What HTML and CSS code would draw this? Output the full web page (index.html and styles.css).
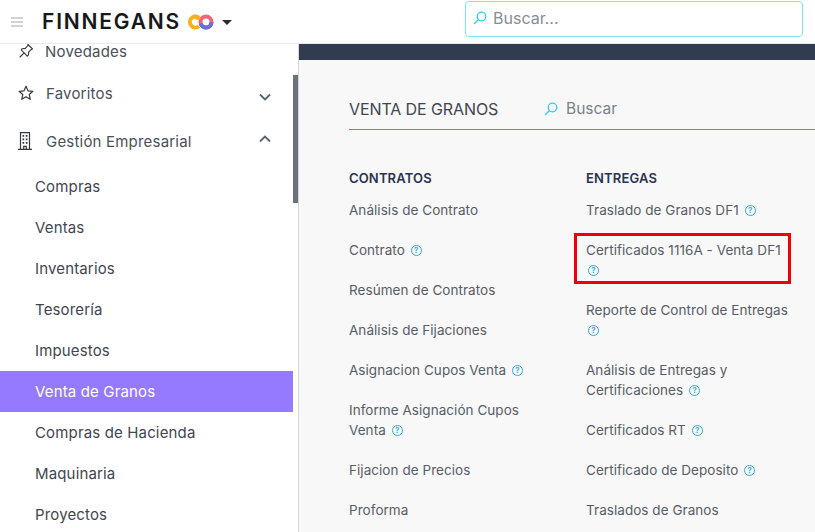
FILE: index.html
```html
<!DOCTYPE html>
<html lang="es">
<head>
    <meta charset="UTF-8">
    <meta name="viewport" content="width=device-width, initial-scale=1.0">
    <title>Finnegans</title>
    <link rel="stylesheet" href="styles.css">
</head>
<body>
    <header class="topbar">
        <div class="brand">
            <svg class="menu-icon" viewBox="0 0 14 12" width="14" height="12"><path d="M1 2h12M1 6h12M1 10h12" stroke="#a3a7ab" stroke-width="1.2" fill="none"/></svg>
            <span class="logo-text">FINNEGANS</span>
            <svg class="logo-mark" viewBox="0 0 28 16" width="28" height="16">
                <circle cx="20" cy="8" r="5.5" fill="none" stroke="#f0637a" stroke-width="4"/>
                <path d="M14.700 9.500a5.500 5.500 0 0 0 10.800-1.500" fill="none" stroke="#6f6bd8" stroke-width="4"/>
                <path d="M13 3.800a5.500 5.500 0 1 0 0 8.400" fill="none" stroke="#fbb11c" stroke-width="4"/>
                <path d="M8 2.500a5.500 5.500 0 0 1 5 3" fill="none" stroke="#fbb11c" stroke-width="4"/>
            </svg>
            <span class="caret"></span>
        </div>
        <div class="top-search">
            <svg class="search-icon" viewBox="0 0 14 14" width="14" height="14"><circle cx="8.5" cy="5.5" r="4.3" fill="none" stroke="#35c9f2" stroke-width="1.3"/><path d="M5.3 8.700 1 13" stroke="#35c9f2" stroke-width="1.3" fill="none"/></svg>
            <span>Buscar...</span>
        </div>
    </header>

    <div class="layout">
        <aside class="sidebar">
            <nav class="side-nav">
                <a class="side-item side-item-first">
                    <svg class="side-icon" viewBox="0 0 16 16" width="16" height="16"><path d="M10 1.500l4.500 4.500-1.200.4-2.600 2.600-.3 3-1.200 1.100L6.200 9.800 2 14l4.200-4.200L3.200 6.900l1.100-1.200 3-.3 2.300-2.600z" fill="none" stroke="#343a40" stroke-width="1.100" stroke-linejoin="round"/></svg>
                    Novedades
                </a>
                <a class="side-item">
                    <svg class="side-icon" viewBox="0 0 16 16" width="16" height="16"><path d="M8 1.300l2 4.500 4.900.5-3.700 3.200 1.100 4.800L8 11.800l-4.300 2.500 1.100-4.800L1.100 6.300l4.900-.5z" fill="none" stroke="#343a40" stroke-width="1.200" stroke-linejoin="round"/></svg>
                    Favoritos
                    <svg class="chevron" viewBox="0 0 12 8" width="12" height="8"><path d="M1 1.500l5 5 5-5" fill="none" stroke="#5a6270" stroke-width="1.800"/></svg>
                </a>
                <a class="side-item">
                    <svg class="side-icon building" viewBox="0 0 14 18" width="14" height="18"><path d="M2.500 17.500V.7h9v16.800M0 17.400h14M5.700 17.400v-3h2.600v3" fill="none" stroke="#343a40" stroke-width="1.200"/><path d="M4.500 3h1.700v1.700H4.500zM7.800 3h1.700v1.700H7.800zM4.500 6.500h1.700v1.700H4.500zM7.800 6.500h1.700v1.700H7.800zM4.500 10h1.700v1.700H4.500zM7.800 10h1.700v1.700H7.800z" fill="#343a40"/></svg>
                    Gestión Empresarial
                    <svg class="chevron chevron-up" viewBox="0 0 12 8" width="12" height="8"><path d="M1 6.500l5-5 5 5" fill="none" stroke="#5a6270" stroke-width="1.800"/></svg>
                </a>
                <a class="sub-item">Compras</a>
                <a class="sub-item">Ventas</a>
                <a class="sub-item">Inventarios</a>
                <a class="sub-item">Tesorería</a>
                <a class="sub-item">Impuestos</a>
                <a class="sub-item active">Venta de Granos</a>
                <a class="sub-item">Compras de Hacienda</a>
                <a class="sub-item">Maquinaria</a>
                <a class="sub-item">Proyectos</a>
            </nav>
            <div class="scroll-track"><div class="scroll-thumb"></div></div>
        </aside>

        <main class="main">
            <div class="dark-bar"></div>
            <div class="panel">
                <div class="panel-head">
                    <h1 class="panel-title">VENTA DE GRANOS</h1>
                    <svg class="search-icon" viewBox="0 0 14 14" width="14" height="14"><circle cx="8.5" cy="5.5" r="4.3" fill="none" stroke="#35c9f2" stroke-width="1.3"/><path d="M5.3 8.700 1 13" stroke="#35c9f2" stroke-width="1.3" fill="none"/></svg>
                    <span class="panel-search">Buscar</span>
                </div>
                <div class="columns">
                    <section class="column">
                        <h2 class="col-title">CONTRATOS</h2>
                        <a class="report">Análisis de Contrato</a>
                        <a class="report">Contrato <i class="help">?</i></a>
                        <a class="report">Resúmen de Contratos</a>
                        <a class="report">Análisis de Fijaciones</a>
                        <a class="report">Asignacion Cupos Venta <i class="help">?</i></a>
                        <a class="report">Informe Asignación Cupos<br>Venta <i class="help">?</i></a>
                        <a class="report">Fijacion de Precios</a>
                        <a class="report">Proforma</a>
                    </section>
                    <section class="column">
                        <h2 class="col-title">ENTREGAS</h2>
                        <a class="report">Traslado de Granos DF1 <i class="help">?</i></a>
                        <a class="report">Certificados 1116A - Venta DF1<br><i class="help">?</i><span class="highlight"></span></a>
                        <a class="report">Reporte de Control de Entregas<br><i class="help">?</i></a>
                        <a class="report">Análisis de Entregas y<br>Certificaciones <i class="help">?</i></a>
                        <a class="report">Certificados RT <i class="help">?</i></a>
                        <a class="report">Certificado de Deposito <i class="help">?</i></a>
                        <a class="report">Traslados de Granos</a>
                    </section>
                </div>
            </div>
        </main>
    </div>
</body>
</html>
```

FILE: styles.css
```css
* {
    box-sizing: border-box;
}

html, body {
    height: 100%;
}

body {
    margin: 0;
    overflow: hidden;
    font-family: Inter, "Open Sans", sans-serif;
    color: #3f4651;
    background-color: #fff;
}

/* Barra superior */
.topbar {
    height: 44px;
    display: flex;
    justify-content: space-between;
    align-items: center;
    padding: 0 12px 0 10px;
    background-color: #fff;
    border-bottom: 1px solid #f0e6ea;
}

.brand {
    display: flex;
    align-items: center;
}

.menu-icon {
    margin-right: 18px;
}

.logo-text {
    font-size: 21px;
    font-weight: 600;
    letter-spacing: 1.8px;
    color: #17181a;
}

.logo-mark {
    margin-left: 5px;
}

.caret {
    width: 0;
    height: 0;
    margin-left: 8px;
    margin-top: 2px;
    border-left: 5px solid transparent;
    border-right: 5px solid transparent;
    border-top: 5px solid #2b2b2b;
}

.top-search {
    width: 338px;
    height: 36px;
    margin-top: -6px;
    display: flex;
    align-items: center;
    gap: 6px;
    padding: 0 7px 2px;
    border: 1px solid #7fe3fb;
    border-radius: 4px;
    font-size: 16px;
    color: #868c94;
}

/* Estructura principal */
.layout {
    height: calc(100% - 44px);
    display: flex;
}

.sidebar {
    width: 299px;
    flex-shrink: 0;
    display: flex;
    border-right: 1px solid #d6d6d6;
    background-color: #fff;
}

.side-nav {
    width: 293px;
    flex-shrink: 0;
}

.scroll-track {
    width: 5px;
}

.scroll-thumb {
    height: 128px;
    margin-top: 31px;
    background-color: #6c727c;
}

.side-item {
    height: 48px;
    display: flex;
    align-items: center;
    padding: 0 22px 2px 18px;
    font-size: 15px;
    letter-spacing: 0.2px;
    color: #4a505a;
}

.side-item-first {
    height: 26px;
    padding-bottom: 12px;
}

.side-item-first .side-icon {
    margin-right: 11px;
}

.side-icon {
    margin-right: 12px;
}

.side-icon.building {
    margin-right: 14px;
}

.chevron {
    margin-left: auto;
    margin-top: 8px;
}

.chevron-up {
    margin-top: -4px;
}

.sub-item {
    display: flex;
    align-items: center;
    height: 41px;
    padding-left: 35px;
    font-size: 15px;
    letter-spacing: 0.15px;
    color: #3f4651;
}

.sub-item.active {
    background-color: #9579ff;
    color: #fff;
}

/* Panel de reportes */
.main {
    flex: 1;
    min-width: 0;
    background-color: #f8f8f8;
}

.dark-bar {
    height: 16px;
    background-color: #323c50;
}

.panel {
    padding: 30px 0 0 50px;
}

.panel-head {
    height: 40px;
    display: flex;
    align-items: center;
    border-bottom: 1px solid #2ba6c6;
    padding-bottom: 2px;
}

.panel-title {
    width: 195px;
    margin: 0;
    font-size: 16px;
    font-weight: 400;
    letter-spacing: -0.1px;
    color: #3f4651;
}

.panel-search {
    margin-left: 8px;
    font-size: 15.5px;
    color: #7a8089;
}

.columns {
    display: flex;
    padding-top: 38px;
}

.column {
    width: 237px;
    flex-shrink: 0;
}

.col-title {
    height: 22px;
    margin: 0;
    line-height: 20px;
    font-size: 13px;
    font-weight: 600;
    letter-spacing: 0.15px;
    color: #2b3350;
}

.report {
    display: block;
    position: relative;
    padding: 10px 0;
    line-height: 20px;
    font-size: 13.5px;
    letter-spacing: 0.05px;
    white-space: nowrap;
    color: #575d66;
}

.help {
    display: inline-block;
    width: 11px;
    height: 11px;
    margin-left: 2px;
    border: 1px solid #33a9cf;
    border-radius: 50%;
    font-size: 8px;
    font-style: normal;
    font-weight: 600;
    letter-spacing: 0;
    line-height: 9px;
    text-align: center;
    vertical-align: 2px;
    color: #33a9cf;
}

/* Recuadro rojo sobre el item */
.highlight {
    position: absolute;
    top: 3px;
    bottom: 6px;
    left: -12px;
    width: 217px;
    border: 3px solid #f00000;
}
```
